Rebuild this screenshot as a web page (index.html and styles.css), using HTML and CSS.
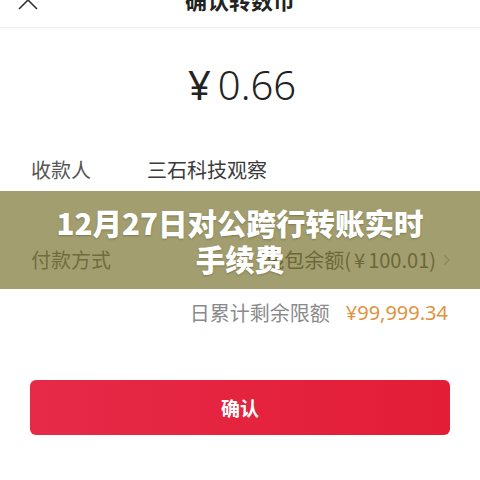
FILE: index.html
```html
<!DOCTYPE html>
<html lang="zh-CN">
<head>
<meta charset="utf-8">
<title>确认转数币</title>
<link rel="stylesheet" href="styles.css">
</head>
<body>
<div class="page">
  <header class="topbar">
    <svg class="back" width="20" height="12" viewBox="0 0 20 12"><polyline points="1,10 10,1 19,10" fill="none" stroke="#333" stroke-width="1.6"/></svg>
    <div class="title">确认转数币</div>
  </header>
  <div class="amount"><span class="yen">¥</span>0.66</div>
  <div class="row payee">
    <span class="label">收款人</span>
    <span class="value">三石科技观察</span>
  </div>
  <div class="row pay">
    <span class="label">付款方式</span>
    <span class="wallet">钱包余额(<span class="wyen">¥</span>100.01)</span>
    <svg class="arrow" width="7" height="12" viewBox="0 0 7 12"><polyline points="1,1 6,6 1,11" fill="none" stroke="#b5b5b5" stroke-width="1.4"/></svg>
  </div>
  <div class="row limit">
    <span class="limit-label">日累计剩余限额</span>
    <span class="limit-value">¥99,999.34</span>
  </div>
  <button class="confirm">确认</button>
  <div class="banner">
    <h1 class="banner-title">12月27日对公跨行转账实时手续费</h1>
  </div>
</div>
</body>
</html>
```

FILE: styles.css
```css
html, body {
  margin: 0;
  padding: 0;
  background: #ffffff;
}
body {
  font-family: "Noto Sans CJK SC", "Noto Sans", sans-serif;
  color: #333;
  width: 480px;
  height: 480px;
  overflow: hidden;
}
.page {
  position: relative;
  height: 480px;
  display: flex;
  flex-direction: column;
}
.topbar {
  position: relative;
  height: 27px;
  border-bottom: 1px solid #f0f0f0;
  box-shadow: 0 1px 2px rgba(0,0,0,0.03);
  display: flex;
  justify-content: center;
  overflow: hidden;
}
.back {
  position: absolute;
  left: 18px;
  top: -1px;
}
.title {
  font-size: 22px;
  line-height: 22px;
  font-weight: 700;
  color: #222;
  margin-top: -12px;
}
.amount {
  margin-top: 33px;
  text-align: center;
  font-family: "Noto Sans", sans-serif;
  font-weight: 300;
  font-size: 40px;
  line-height: 48px;
  color: #222;
  padding-left: 4px;
}
.yen {
  margin-right: 7px;
  font-weight: 400;
}
.row {
  display: flex;
  align-items: center;
  padding: 0 31px;
  height: 28px;
  font-size: 20px;
  line-height: 28px;
}
.payee {
  margin-top: 47px;
}
.label {
  width: 116px;
  color: #555;
}
.value {
  color: #3a3a3a;
}
.pay {
  margin-top: 62px;
}
.wallet {
  margin-left: auto;
  color: #444;
}
.wyen {
  margin: 0 3px;
}
.arrow {
  margin-left: 7px;
  margin-right: -1px;
}
.limit {
  margin-top: 25px;
  justify-content: flex-end;
  padding-right: 32px;
}
.limit-label {
  color: #8a8a8a;
}
.limit-value {
  margin-left: 16px;
  font-family: "Noto Sans", sans-serif;
  color: #e0923e;
}
.confirm {
  margin: 53px 30px 0;
  height: 55px;
  border: none;
  border-radius: 6px;
  background: linear-gradient(90deg, #e62a48, #e31d36);
  color: #fff;
  font-family: "Noto Sans CJK SC", sans-serif;
  font-size: 19px;
  font-weight: 700;
  padding: 0;
}
.banner {
  position: absolute;
  left: 0;
  right: 0;
  top: 191px;
  height: 98px;
  background: rgba(124, 118, 52, 0.71);
  display: flex;
  align-items: center;
  justify-content: center;
  padding: 0 50px;
  box-sizing: border-box;
}
.banner-title {
  margin: 0;
  text-align: center;
  color: #fff;
  font-size: 29.5px;
  line-height: 36px;
  font-weight: 900;
  text-shadow: 0 1px 2px rgba(60, 55, 20, 0.35);
}
```
